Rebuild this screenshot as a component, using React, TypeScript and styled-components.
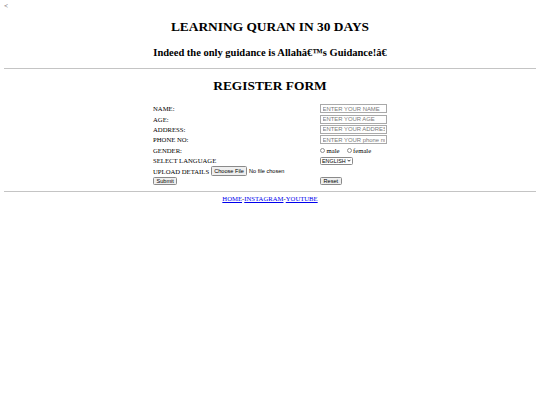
import React from 'react';
import styled, { createGlobalStyle } from 'styled-components';

const GlobalStyle = createGlobalStyle`
  html, body {
    margin: 0;
    padding: 0;
    background: #ffffff;
  }
`;

const Page = styled.div`
  padding: 2px 4px 0;
  font-family: "Liberation Serif", "Times New Roman", serif;
  color: #000;
`;

const Stray = styled.div`
  font-size: 7px;
  line-height: 8px;
  color: #555;
`;

const Title = styled.h1<{ $top: number }>`
  text-align: center;
  font-size: 13.4px;
  line-height: 16px;
  margin: ${p => p.$top}px 0 0;
`;

const Tagline = styled.h2`
  text-align: center;
  font-size: 10.5px;
  line-height: 12px;
  margin: 12px 0 0;
`;

const Rule = styled.hr<{ $top: number }>`
  margin: ${p => p.$top}px 0 0;
  border: none;
  border-top: 1px solid #c4c4c4;
  height: 0;
`;

const FormGrid = styled.form`
  display: flex;
  flex-direction: column;
  align-items: center;
  margin-top: 9.5px;
  font-size: 6.7px;
`;

const Row = styled.div`
  display: grid;
  grid-template-columns: 167px 67px;
  height: 10.4px;
  align-items: center;
`;

const Label = styled.span`
  display: flex;
  align-items: center;
  gap: 2px;
  white-space: nowrap;
`;

const TextField = styled.input`
  font-family: "Liberation Sans", Arial, sans-serif;
  font-size: 5.9px;
  width: 67px;
  height: 9px;
  padding: 0 1.5px;
  border: 1px solid #a9a9a9;
  box-sizing: border-box;
  outline: none;
  &::placeholder {
    color: #7a7a7a;
  }
`;

const RadioGroup = styled.div`
  display: flex;
  align-items: center;
`;

const RadioDot = styled.input`
  appearance: none;
  flex: none;
  width: 5px;
  height: 5px;
  margin: 0 1.5px 0 0;
  border: 0.6px solid #8f8f8f;
  border-radius: 50%;
  box-sizing: border-box;
`;

const RadioText = styled.span`
  margin-right: 7px;
`;

const Picker = styled.div`
  display: inline-flex;
  align-items: center;
  justify-content: space-between;
  width: 33px;
  height: 8px;
  padding: 0 1.5px 0 1px;
  box-sizing: border-box;
  border: 0.6px solid #8a8a8a;
  border-radius: 1.5px;
  font-family: "Liberation Sans", Arial, sans-serif;
  font-size: 5.4px;
`;

const FileButton = styled.span`
  display: inline-flex;
  align-items: center;
  height: 8px;
  padding: 0 2px;
  background: #efefef;
  border: 0.6px solid #8a8a8a;
  border-radius: 1.5px;
  font-family: "Liberation Sans", Arial, sans-serif;
  font-size: 5.6px;
`;

const FileNote = styled.span`
  font-family: "Liberation Sans", Arial, sans-serif;
  font-size: 5.6px;
`;

const Action = styled.button`
  justify-self: start;
  height: 8px;
  padding: 0 2.5px;
  background: #efefef;
  border: 0.6px solid #8a8a8a;
  border-radius: 1.5px;
  font-family: "Liberation Sans", Arial, sans-serif;
  font-size: 5.6px;
  line-height: 6px;
  color: #000;
`;

const Links = styled.div`
  text-align: center;
  margin-top: 3px;
  font-size: 6.7px;
  line-height: 8px;
`;

const NavLink = styled.a`
  color: #0000ee;
  text-decoration: underline;
  text-decoration-thickness: 1px;
  text-underline-offset: 0.5px;
`;

const rows = [
  { label: 'NAME:', placeholder: 'ENTER YOUR NAME' },
  { label: 'AGE:', placeholder: 'ENTER YOUR AGE' },
  { label: 'ADDRESS:', placeholder: 'ENTER YOUR ADDRESS' },
  { label: 'PHONE NO:', placeholder: 'ENTER YOUR phone number' },
];

const App: React.FC = () => {
  return (
    <>
      <GlobalStyle />
      <Page>
        <Stray>&lt;</Stray>
        <Title $top={9}>LEARNING QURAN IN 30 DAYS</Title>
        <Tagline>Indeed the only guidance is Allahâ€™s Guidance!â€</Tagline>
        <Rule $top={9} />
        <Title $top={9}>REGISTER FORM</Title>
        <FormGrid onSubmit={e => e.preventDefault()}>
          {rows.map(r => (
            <Row key={r.label}>
              <Label>{r.label}</Label>
              <TextField type="text" placeholder={r.placeholder} />
            </Row>
          ))}
          <Row>
            <Label>GENDER:</Label>
            <RadioGroup>
              <RadioDot type="radio" name="gender" />
              <RadioText>male</RadioText>
              <RadioDot type="radio" name="gender" />
              <RadioText>female</RadioText>
            </RadioGroup>
          </Row>
          <Row>
            <Label>SELECT LANGUAGE</Label>
            <Picker>
              ENGLISH
              <svg width="4" height="3" viewBox="0 0 8 5">
                <path d="M1 1l3 3 3-3" fill="none" stroke="#000" strokeWidth="1.6" />
              </svg>
            </Picker>
          </Row>
          <Row>
            <Label>
              UPLOAD DETAILS
              <FileButton>Choose File</FileButton>
              <FileNote>No file chosen</FileNote>
            </Label>
            <span />
          </Row>
          <Row>
            <Action type="submit">Submit</Action>
            <Action type="reset">Reset</Action>
          </Row>
        </FormGrid>
        <Rule $top={4} />
        <Links>
          <NavLink href="#">HOME</NavLink>-<NavLink href="#">INSTAGRAM</NavLink>-
          <NavLink href="#">YOUTUBE</NavLink>
        </Links>
      </Page>
    </>
  );
};

export default App;
